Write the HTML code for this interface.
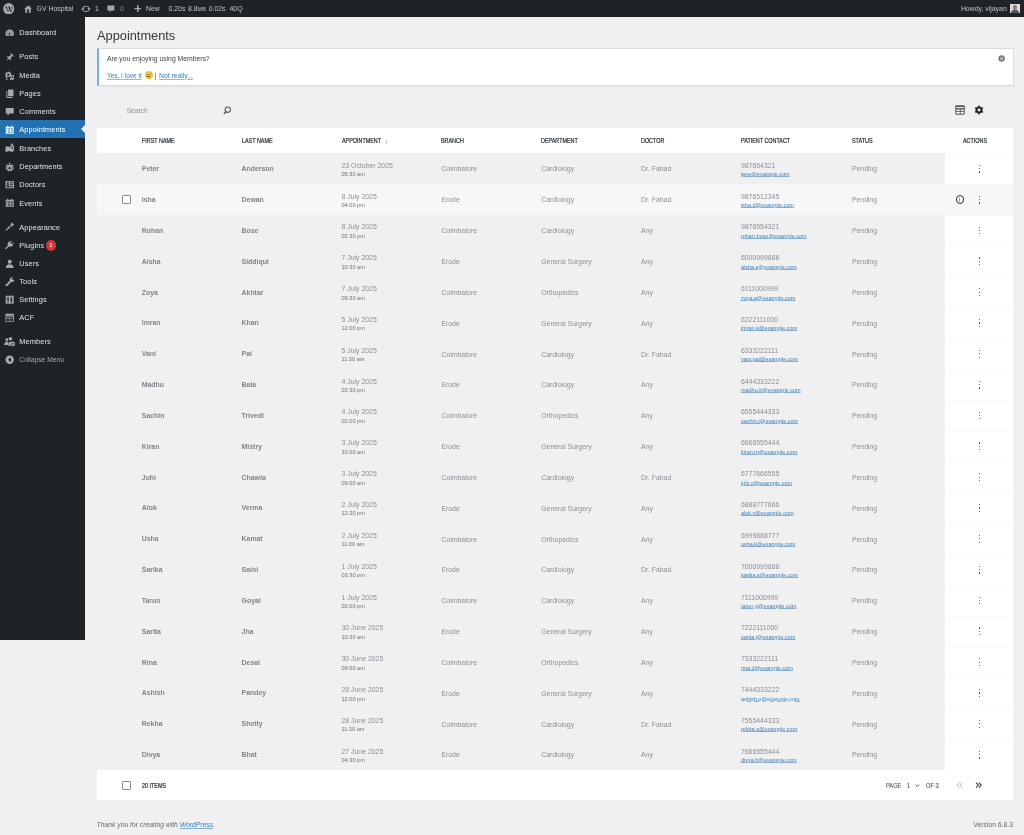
<!DOCTYPE html>
<html><head><meta charset="utf-8"><title>Appointments</title><style>
html,body{margin:0;padding:0}
body{width:1024px;height:835px;overflow:hidden;will-change:transform;background:#f0f0f1;position:relative;font-family:"Liberation Sans",sans-serif;color:#3c434a}
#ab{position:absolute;left:0;top:0;width:1024px;height:17px;background:#1d2327;color:#c3c4c7;font-size:6.9px}
#ab .t{position:absolute;top:0.4px;line-height:17px;white-space:nowrap}
#ab svg{position:absolute}
#sb{position:absolute;left:0;top:17px;width:85px;height:623px;background:#1d2327}
.mi{position:absolute;left:0;width:85px;height:18.4px;color:#e2e3e5;font-size:7.35px;line-height:18.4px}
.mi span{position:absolute;left:19.3px;top:0.8px;white-space:nowrap;letter-spacing:0.12px}
.mi svg{position:absolute;left:4.8px;top:4.6px;width:9.4px;height:9.4px}
.mi.cur{background:#2271b1;color:#fff;height:18px}
.mi.cur:after{content:"";position:absolute;right:0;top:4.95px;border:4.2px solid transparent;border-right-color:#f0f0f1;border-left:0}
.mi .badge{position:absolute;top:4.5px;width:10.2px;height:10.2px;border-radius:50%;background:#d63638;color:#fff;font-size:6px;line-height:10.2px;text-align:center}
h1{position:absolute;left:97px;top:26.8px;margin:0;font-weight:normal;font-size:12.8px;line-height:18px;color:#32373c}
#notice{position:absolute;left:97px;top:48.2px;width:916.6px;height:37.6px;box-sizing:border-box;background:#fff;border:0.6px solid #dcdcde;border-left:2.3px solid #72aee6;box-shadow:0 0.5px 0.5px rgba(0,0,0,.04);font-size:6.8px;color:#3c434a}
#notice .q{position:absolute;left:7.9px;top:5px;line-height:9px;white-space:nowrap}
#notice .l{position:absolute;left:7.9px;top:21.4px;font-size:6.5px;line-height:9px;white-space:nowrap}
#notice a{color:#3582c4;text-decoration:underline;text-decoration-color:#8fb8dc}
.emo{display:inline-block;position:relative;width:8px;height:8px;border-radius:50%;background:#f0c33c;vertical-align:-1.5px;margin:0 2.2px 0 2.8px}.emo:before{content:"";position:absolute;left:2.2px;top:2.8px;width:0.9px;height:0.9px;background:#6b5a1e;box-shadow:2.7px 0 0 #6b5a1e}.emo:after{content:"";position:absolute;left:2.4px;top:5.2px;width:3.2px;height:0.6px;background:#6b5a1e}
#srch{position:absolute;left:126.7px;top:105.2px;font-size:6.6px;color:#8c8f94;line-height:11px}
#tbl{position:absolute;left:97px;top:128.4px;width:916px;height:672px}
#thead{position:absolute;left:0;top:0;width:916px;height:24.8px;background:#fff}
.th{position:absolute;top:0.6px;line-height:24.8px;font-size:6.6px;font-weight:normal;-webkit-text-stroke:0.2px #1d2327;color:#1d2327;white-space:nowrap;transform:scaleX(.82);transform-origin:0 50%}
.row{position:absolute;left:97px;width:916px;height:30.84px;background:#f0f0f1}
.row.hover{background:#f7f7f7}
.row span{position:absolute;white-space:nowrap}
.nm{top:1px;line-height:30.84px;font-size:6.9px;font-weight:bold;color:#808387}
.tx{top:1.3px;line-height:30.84px;font-size:6.9px;color:#8c8f94}
.dt{top:8.56px;font-size:6.9px;color:#8c8f94}
.dt b{display:block;font-weight:normal;line-height:7.5px}
.dt i{display:block;font-style:normal;font-size:5.6px;line-height:11px;color:#6c7075}
.ct{top:8.56px;font-size:6.9px;color:#8c8f94}
.ct b{display:block;font-weight:normal;line-height:7.5px}
.ct a{display:block;font-size:5.5px;line-height:10.8px;color:#3a80ba;text-decoration:underline;text-decoration-color:#86aed0;text-underline-offset:0.1px;text-decoration-thickness:0.5px}
.act{left:848px;top:0;width:68px;height:30.84px;background:#fff;box-shadow:inset 0 0.6px 0 #f2f2f2}
.row.hover .act{background:#f7f7f7}
.dots{left:33.6px;top:11.65px;width:2px;height:10px}
.dots i{display:block;width:1.2px;height:1.2px;border-radius:50%;background:#2c3338;margin:0 0 2.15px 0}
.info{left:10.6px;top:10.9px;width:8.8px;height:8.8px;box-sizing:border-box;border:1.3px solid #2c3338;border-radius:50%}.info i{position:absolute;left:2.4px;top:1.4px;width:1.5px;height:4.4px;background:#a0a3a8;border-radius:0.5px}
.cb{top:11px;width:9.2px;height:9px;box-sizing:border-box;border:0.9px solid #82868b;border-radius:1.2px;background:#fff}
#tfoot{position:absolute;left:97px;top:770px;width:916px;height:30px;background:#fff}
#tfoot span{position:absolute;white-space:nowrap}
#foot1{position:absolute;left:96.6px;top:819px;font-size:6.78px;font-style:italic;color:#646970;line-height:11px}
#foot1 a{color:#3a80ba;text-decoration:underline;text-decoration-color:#86aed0;text-decoration-thickness:0.6px}
#foot2{position:absolute;right:11px;top:819px;font-size:6.8px;color:#646970;line-height:11px}

.pg{top:0.5px;line-height:30px;font-size:6.3px;color:#50575e;-webkit-text-stroke:0.1px #50575e;transform:scaleX(.9);transform-origin:0 50%}

</style></head><body>
<div id="ab">
  <svg style="left:3.4px;top:2.8px" width="11.4" height="11.4" viewBox="0 0 20 20"><circle cx="10" cy="10" r="9.8" fill="#a7aaad"/><path d="M3.3 6.4h4.3v.9H6.7l2.3 7 1.5-4.4-.9-2.6h-.8v-.9h4.1v.9h-.9l2.3 7 1-3.3c.5-1.6.3-2.4-.2-3.2-.3-.5-.5-1 .1-1.3h1.6l-.3 3.5-1.9 5.8h-.9L11 10.9l-1.5 4.5h-.9L4.9 7.3h-1.6z" fill="#1d2327"/></svg>
  <svg style="left:23.8px;top:4.5px" width="8" height="8.2" viewBox="0 0 20 20"><path d="M10 1L0.5 9.6h2.6V19h13.8V9.6h2.6L16 6.4V2h-2.6v2.1z" fill="#a7aaad"/><circle cx="10" cy="13" r="2.4" fill="#1d2327"/><rect x="7.6" y="13" width="4.8" height="6" fill="#1d2327"/></svg>
  <span class="t" style="left:36.6px">GV Hospital</span>
  <svg style="left:80.6px;top:4.6px" width="10" height="7.8" viewBox="0 0 20 16"><path d="M10 1.5c3.4 0 6.3 2.2 7.3 5.3H20l-3.5 4-3.5-4h2.2A5.2 5.2 0 0 0 5.2 6.8l-2.6 0C3.7 3.7 6.6 1.5 10 1.5z M10 14.5c-3.4 0-6.3-2.2-7.3-5.3H0l3.5-4 3.5 4H4.8a5.2 5.2 0 0 0 10 0h2.6c-1.1 3.1-4 5.3-7.4 5.3z" fill="#a7aaad"/></svg>
  <span class="t" style="left:94.9px">1</span>
  <svg style="left:107.4px;top:5.1px" width="7.8" height="7.8" viewBox="0 0 20 20"><path d="M1 1h18v13h-8l-4 5v-5H1z" fill="#a7aaad"/></svg>
  <span class="t" style="left:120.3px;color:#8c8f94">0</span>
  <svg style="left:133.9px;top:5.1px" width="7.6" height="7.2" viewBox="0 0 20 20"><path d="M8 0.5h4v7.5h7.5v4H12v7.5H8V12H0.5V8H8z" fill="#a7aaad"/></svg>
  <span class="t" style="left:146px">New</span>
  <span class="t" style="left:168.5px">0.20s</span>
  <span class="t" style="left:188px">8.8<span style="font-size:5.5px">MB</span></span>
  <span class="t" style="left:208.7px">0.02s</span>
  <span class="t" style="left:229.5px">40Q</span>
  <span class="t" style="left:960.9px">Howdy, vijayan</span>
  <div style="position:absolute;left:1009.9px;top:3.9px;width:9.8px;height:9.6px;background:#dcdadb;overflow:hidden"><div style="position:absolute;left:3px;top:1.2px;width:3.8px;height:4.6px;border-radius:45%;background:#8e7b7b"></div><div style="position:absolute;left:0.8px;top:6px;width:8.2px;height:4px;border-radius:3px 3px 0 0;background:#50545e"></div></div>
</div>
<div id="sb">
<div class="mi" style="top:6.45px"><svg viewBox="0 0 20 20"><path d="M10 3.2C4.9 3.2 1 7.2 1 12.2c0 1.6.4 3 1.1 4.3h15.8c.7-1.3 1.1-2.7 1.1-4.3 0-5-3.9-9-9-9z" fill="#a7aaad"/><path d="M12.8 5.6l-2.2 6.2a1.8 1.8 0 1 1-1.6-.5z" fill="#1d2327"/><circle cx="4.6" cy="12" r="1" fill="#1d2327"/><circle cx="15.4" cy="12" r="1" fill="#1d2327"/><circle cx="6.3" cy="7.8" r="1" fill="#1d2327"/></svg><span>Dashboard</span></div>
<div class="mi" style="top:30.50px"><svg viewBox="0 0 20 20"><path d="M11.5 1l7.5 7.5-1.8 1.1-1.8-.5-3.3 3.3.6 3.6-1.7 1.7-3.2-3.2-5.6 5.6H1.5v-.7l5.6-5.6-3.2-3.2 1.7-1.7 3.6.6 3.3-3.3-.5-1.8z" fill="#a7aaad"/></svg><span>Posts</span></div>
<div class="mi" style="top:49.10px"><svg viewBox="0 0 20 20"><path d="M1 3.5h3l1.2-2h4.6l1.2 2h2v8.5H1z" fill="#a7aaad"/><circle cx="7" cy="7.6" r="2.4" fill="#1d2327"/><path d="M13 9.5l6-1.5v8.8a2.2 2.2 0 1 1-1.8-2.2v-4l-2.4.6v5.6a2.2 2.2 0 1 1-1.8-2.2z M2 13h3v1.8H3.8V18H7v1.5H3a1 1 0 0 1-1-1z" fill="#a7aaad"/></svg><span>Media</span></div>
<div class="mi" style="top:67.40px"><svg viewBox="0 0 20 20"><path d="M6.5 1H18v14.5H6.5z M3 4.5h2v12.5h11V19H3z" fill="#a7aaad"/></svg><span>Pages</span></div>
<div class="mi" style="top:85.10px"><svg viewBox="0 0 20 20"><path d="M1.5 2h17v12h-8.5l-4.5 4.8V14H1.5z" fill="#a7aaad"/></svg><span>Comments</span></div>
<div class="mi cur" style="top:103.40px"><svg viewBox="0 0 20 20"><path d="M1.5 3.5h3V1.5h2.2v2h6.6v-2h2.2v2h3v15.5h-17z" fill="#fff"/><path d="M3.5 7.5h13v10h-13z" fill="#2271b1"/><path d="M4.3 8.3h2.2v8.4H4.3zm3.2 0h2.2v8.4H7.5zm3.2 0h2.2v8.4h-2.2zm3.2 0h2v8.4h-2z" fill="#fff"/></svg><span>Appointments</span></div>
<div class="mi" style="top:121.80px"><svg viewBox="0 0 20 20"><path d="M1 8.5l4.5-1.8 4.5 1.8 4-1.6V12a1 1 0 0 0 2 0V6.1l3-1.1V17l-5 2-4.5-1.8L1 19z" fill="#a7aaad"/><path d="M14.5 1a2.8 2.8 0 0 1 2.8 2.8c0 2.2-2.8 5.2-2.8 5.2s-2.8-3-2.8-5.2A2.8 2.8 0 0 1 14.5 1z" fill="#a7aaad"/><circle cx="14.5" cy="3.8" r="1" fill="#1d2327"/></svg><span>Branches</span></div>
<div class="mi" style="top:140.30px"><svg viewBox="0 0 20 20"><path d="M10 1.5a2 2 0 1 1 0 4 2 2 0 0 1 0-4z M4 5.5a1.8 1.8 0 1 1 0 3.6A1.8 1.8 0 0 1 4 5.5z M16 5.5a1.8 1.8 0 1 1 0 3.6 1.8 1.8 0 0 1 0-3.6z M6.5 6.5h7l2 3v7.5l-2 2h-7l-2-2V9.5z M1.5 10h2v6h-2z M16.5 10h2v6h-2z" fill="#a7aaad"/><path d="M9 9.5h2v2.5h2.5v2H11v2.5H9V14H6.5v-2H9z" fill="#1d2327"/></svg><span>Departments</span></div>
<div class="mi" style="top:158.50px"><svg viewBox="0 0 20 20"><path d="M1 2.5h18v15H1z" fill="#a7aaad"/><path d="M10.5 5h6.5v1.8h-6.5zm0 3.5h6.5v1.8h-6.5z M3 13.5h14V15.5H3z" fill="#1d2327"/><circle cx="6" cy="6.8" r="2" fill="#1d2327"/><path d="M2.8 12.5c0-2.2 1.4-3.5 3.2-3.5s3.2 1.3 3.2 3.5z" fill="#1d2327"/></svg><span>Doctors</span></div>
<div class="mi" style="top:176.80px"><svg viewBox="0 0 20 20"><path d="M1.5 3.5h3V1.5h2.2v2h6.6v-2h2.2v2h3v15.5h-17z" fill="#a7aaad"/><path d="M3.5 7.5h13v10h-13z" fill="#1d2327"/><path d="M4.3 8.3h2.2v8.4H4.3zm3.2 0h2.2v8.4H7.5zm3.2 0h2.2v8.4h-2.2zm3.2 0h2v8.4h-2z" fill="#a7aaad"/></svg><span>Events</span></div>
<div class="mi" style="top:200.80px"><svg viewBox="0 0 20 20"><path d="M14 1l5 5-3.5 3.5-1.3-1.3-4.4 4.4-1.5-1.5 4.4-4.4L11.4 5.4z M8.6 10.2l1.2 1.2c.5.5.5 1.3 0 1.8l-.8.8c-.5.5-1.2.6-1.8.3L2.5 19 1 17.5l4.7-4.7c-.3-.6-.2-1.3.3-1.8l.8-.8c.5-.5 1.3-.5 1.8 0z" fill="#a7aaad"/></svg><span>Appearance</span></div>
<div class="mi" style="top:218.90px"><svg viewBox="0 0 20 20"><path d="M13.2 1l1.4 1.4-3 3 3 3 3-3L19 6.8l-3 3 1.2 1.2-1.8 1.8c-2 2-5 2.2-7.2.8L4 17.8V19H1v-3h1.2l4.2-4.2c-1.4-2.2-1.2-5.2.8-7.2L9 2.8l1.2 1.2z" fill="#a7aaad"/></svg><span>Plugins</span><span class="badge" style="left:45.9px">1</span></div>
<div class="mi" style="top:237.30px"><svg viewBox="0 0 20 20"><circle cx="10" cy="6" r="4.3" fill="#a7aaad"/><path d="M2 19c0-4.5 2.5-7.6 8-7.6s8 3.1 8 7.6z" fill="#a7aaad"/></svg><span>Users</span></div>
<div class="mi" style="top:255.40px"><svg viewBox="0 0 20 20"><path d="M17.3 1.2l-3 3 .5 1.9 1.9.5 3-3c.9 2.3.2 4.9-1.8 6.4-1.4 1-3.2 1.3-4.9.8L4.4 19.4a2.1 2.1 0 0 1-3-3l8.6-8.6c-.5-1.7-.2-3.5.8-4.9 1.5-2 4.2-2.7 6.5-1.7z" fill="#a7aaad"/></svg><span>Tools</span></div>
<div class="mi" style="top:273.60px"><svg viewBox="0 0 20 20"><path d="M1.5 1.5h17v17h-17z" fill="#a7aaad"/><path d="M5.5 3.5h2v4h1.5v2.2H7.5v6.8h-2V9.7H4V7.5h1.5z M12.5 3.5h2v6h1.5v2.2h-1.5v4.8h-2v-4.8H11V9.5h1.5z" fill="#1d2327"/></svg><span>Settings</span></div>
<div class="mi" style="top:291.70px"><svg viewBox="0 0 20 20"><path d="M1 1.5h18v17H1z" fill="#a7aaad"/><path d="M2.8 6h14.4v4H2.8z M2.8 11.6h6.4v5.2H2.8z M10.8 11.6h6.4v5.2h-6.4z" fill="#1d2327"/><path d="M4 7.2h12v1.6H4z" fill="#a7aaad"/></svg><span>ACF</span></div>
<div class="mi" style="top:315.50px"><svg viewBox="0 0 20 20" style="left:3.6px;top:3.7px;width:11.2px;height:11.2px"><circle cx="5" cy="6.5" r="2.6" fill="#a7aaad"/><path d="M0.5 16c0-3.6 1.8-6 4.5-6 1.4 0 2.5.6 3.3 1.6C7.4 13 7 14.5 7 16z" fill="#a7aaad"/><circle cx="11.5" cy="4.8" r="3.2" fill="#a7aaad"/><path d="M7.5 17.5c0-4.4 1.6-7.4 4-7.4 1 0 1.8.4 2.5 1.1-1.5 1.2-2.5 3.5-2.5 6.3z" fill="#a7aaad"/><circle cx="15.5" cy="14" r="4.2" fill="#a7aaad"/><circle cx="15.5" cy="14" r="1.6" fill="#1d2327"/></svg><span>Members</span></div>
<div class="mi" style="top:333.60px"><svg viewBox="0 0 20 20"><circle cx="10" cy="10" r="9" fill="#a7aaad"/><path d="M12.8 5.2v9.6L6 10z" fill="#1d2327"/></svg><span style="color:#a7aaad;font-size:6.7px;letter-spacing:0">Collapse Menu</span></div>

</div>
<h1>Appointments</h1>
<div id="notice">
  <div class="q">Are you enjoying using Members?</div>
  <div class="l"><a>Yes, I love it</a><span class="emo"></span>|<a style="margin-left:2.6px;font-size:6.8px">Not really...</a></div>
  <svg style="position:absolute;right:7.7px;top:6.2px" width="7.2" height="7.2" viewBox="0 0 20 20"><circle cx="10" cy="10" r="9" fill="#787c82"/><path d="M6.5 6.5l7 7M13.5 6.5l-7 7" stroke="#fff" stroke-width="2.4"/></svg>
</div>
<div id="srch">Search</div>
<svg style="position:absolute;left:222px;top:105px" width="10" height="10" viewBox="0 0 10 10"><circle cx="5.8" cy="4.7" r="2.65" fill="none" stroke="#50575e" stroke-width="1.1"/><path d="M3.9 6.7L2.2 8.5" stroke="#50575e" stroke-width="1.3" stroke-linecap="round"/></svg>
<svg style="position:absolute;left:955px;top:105px" width="10" height="10" viewBox="0 0 20 20"><rect x="0.5" y="0.5" width="19" height="19" rx="2.6" fill="#50575e"/><rect x="2.4" y="4" width="15.2" height="2.2" fill="#f0f0f1"/><rect x="2.4" y="9" width="7.4" height="2.8" fill="#f0f0f1"/><rect x="11.2" y="9" width="6.4" height="2.8" fill="#f0f0f1"/><rect x="2.4" y="13.6" width="7.4" height="3.8" fill="#f0f0f1"/><rect x="11.2" y="13.6" width="6.4" height="3.8" fill="#f0f0f1"/></svg>
<svg style="position:absolute;left:974.2px;top:105.1px" width="10" height="10" viewBox="0 0 10 10"><path d="M5.00 0.45 L6.52 2.36 L8.94 2.73 L8.05 5.00 L8.94 7.27 L6.52 7.64 L5.00 9.55 L3.48 7.64 L1.06 7.28 L1.95 5.00 L1.06 2.72 L3.47 2.36Z" fill="#1d2327" stroke="#1d2327" stroke-width="0.45" stroke-linejoin="round"/><circle cx="5" cy="5" r="1.45" fill="#f0f0f1"/></svg>
<div id="thead" style="position:absolute;left:97px;top:128.4px">
  <span class="th" style="left:44.8px">FIRST NAME</span>
  <span class="th" style="left:144.6px">LAST NAME</span>
  <span class="th" style="left:244.5px">APPOINTMENT <span style="font-size:6px;margin-left:3px;-webkit-text-stroke:0">&#8595;</span></span>
  <span class="th" style="left:344.4px">BRANCH</span>
  <span class="th" style="left:444.2px">DEPARTMENT</span>
  <span class="th" style="left:544px">DOCTOR</span>
  <span class="th" style="left:643.9px">PATIENT CONTACT</span>
  <span class="th" style="left:754.9px">STATUS</span>
  <span class="th" style="left:866.2px">ACTIONS</span>
</div>
<div class="row" style="top:153.20px"><span class="nm" style="left:44.8px">Peter</span><span class="nm" style="left:144.6px">Anderson</span><span class="dt" style="left:244.5px"><b>23 October 2025</b><i>05:30 am</i></span><span class="tx" style="left:344.4px">Coimbatore</span><span class="tx" style="left:444.2px">Cardiology</span><span class="tx" style="left:544.0px">Dr. Fahad</span><span class="ct" style="left:643.9px"><b>987654321</b><a>jane@example.com</a></span><span class="tx" style="left:754.9px">Pending</span><span class="act"><span class="dots"><i></i><i></i><i></i></span></span></div>
<div class="row hover" style="top:184.04px"><span class="cb" style="left:25px"></span><span class="nm" style="left:44.8px">Isha</span><span class="nm" style="left:144.6px">Dewan</span><span class="dt" style="left:244.5px"><b>8 July 2025</b><i>04:00 pm</i></span><span class="tx" style="left:344.4px">Erode</span><span class="tx" style="left:444.2px">Cardiology</span><span class="tx" style="left:544.0px">Dr. Fahad</span><span class="ct" style="left:643.9px"><b>9876512345</b><a>isha.d@example.com</a></span><span class="tx" style="left:754.9px">Pending</span><span class="act"><span class="info"><i></i></span><span class="dots"><i></i><i></i><i></i></span></span></div>
<div class="row" style="top:214.88px"><span class="nm" style="left:44.8px">Rohan</span><span class="nm" style="left:144.6px">Bose</span><span class="dt" style="left:244.5px"><b>8 July 2025</b><i>02:30 pm</i></span><span class="tx" style="left:344.4px">Coimbatore</span><span class="tx" style="left:444.2px">Cardiology</span><span class="tx" style="left:544.0px">Any</span><span class="ct" style="left:643.9px"><b>9876554321</b><a>rohan.bose@example.com</a></span><span class="tx" style="left:754.9px">Pending</span><span class="act"><span class="dots"><i></i><i></i><i></i></span></span></div>
<div class="row" style="top:245.72px"><span class="nm" style="left:44.8px">Aisha</span><span class="nm" style="left:144.6px">Siddiqui</span><span class="dt" style="left:244.5px"><b>7 July 2025</b><i>10:30 am</i></span><span class="tx" style="left:344.4px">Erode</span><span class="tx" style="left:444.2px">General Surgery</span><span class="tx" style="left:544.0px">Any</span><span class="ct" style="left:643.9px"><b>6000999888</b><a>aisha.s@example.com</a></span><span class="tx" style="left:754.9px">Pending</span><span class="act"><span class="dots"><i></i><i></i><i></i></span></span></div>
<div class="row" style="top:276.56px"><span class="nm" style="left:44.8px">Zoya</span><span class="nm" style="left:144.6px">Akhtar</span><span class="dt" style="left:244.5px"><b>7 July 2025</b><i>09:30 am</i></span><span class="tx" style="left:344.4px">Coimbatore</span><span class="tx" style="left:444.2px">Orthopedics</span><span class="tx" style="left:544.0px">Any</span><span class="ct" style="left:643.9px"><b>6111000999</b><a>zoya.a@example.com</a></span><span class="tx" style="left:754.9px">Pending</span><span class="act"><span class="dots"><i></i><i></i><i></i></span></span></div>
<div class="row" style="top:307.40px"><span class="nm" style="left:44.8px">Imran</span><span class="nm" style="left:144.6px">Khan</span><span class="dt" style="left:244.5px"><b>5 July 2025</b><i>12:00 pm</i></span><span class="tx" style="left:344.4px">Erode</span><span class="tx" style="left:444.2px">General Surgery</span><span class="tx" style="left:544.0px">Any</span><span class="ct" style="left:643.9px"><b>6222111000</b><a>imran.k@example.com</a></span><span class="tx" style="left:754.9px">Pending</span><span class="act"><span class="dots"><i></i><i></i><i></i></span></span></div>
<div class="row" style="top:338.24px"><span class="nm" style="left:44.8px">Vani</span><span class="nm" style="left:144.6px">Pai</span><span class="dt" style="left:244.5px"><b>5 July 2025</b><i>11:30 am</i></span><span class="tx" style="left:344.4px">Coimbatore</span><span class="tx" style="left:444.2px">Cardiology</span><span class="tx" style="left:544.0px">Dr. Fahad</span><span class="ct" style="left:643.9px"><b>6333222111</b><a>vani.pai@example.com</a></span><span class="tx" style="left:754.9px">Pending</span><span class="act"><span class="dots"><i></i><i></i><i></i></span></span></div>
<div class="row" style="top:369.08px"><span class="nm" style="left:44.8px">Madhu</span><span class="nm" style="left:144.6px">Bala</span><span class="dt" style="left:244.5px"><b>4 July 2025</b><i>03:30 pm</i></span><span class="tx" style="left:344.4px">Erode</span><span class="tx" style="left:444.2px">Cardiology</span><span class="tx" style="left:544.0px">Any</span><span class="ct" style="left:643.9px"><b>6444333222</b><a>madhu.b@example.com</a></span><span class="tx" style="left:754.9px">Pending</span><span class="act"><span class="dots"><i></i><i></i><i></i></span></span></div>
<div class="row" style="top:399.92px"><span class="nm" style="left:44.8px">Sachin</span><span class="nm" style="left:144.6px">Trivedi</span><span class="dt" style="left:244.5px"><b>4 July 2025</b><i>02:00 pm</i></span><span class="tx" style="left:344.4px">Coimbatore</span><span class="tx" style="left:444.2px">Orthopedics</span><span class="tx" style="left:544.0px">Any</span><span class="ct" style="left:643.9px"><b>6555444333</b><a>sachin.t@example.com</a></span><span class="tx" style="left:754.9px">Pending</span><span class="act"><span class="dots"><i></i><i></i><i></i></span></span></div>
<div class="row" style="top:430.76px"><span class="nm" style="left:44.8px">Kiran</span><span class="nm" style="left:144.6px">Mistry</span><span class="dt" style="left:244.5px"><b>3 July 2025</b><i>10:00 am</i></span><span class="tx" style="left:344.4px">Erode</span><span class="tx" style="left:444.2px">General Surgery</span><span class="tx" style="left:544.0px">Any</span><span class="ct" style="left:643.9px"><b>6666555444</b><a>kiran.m@example.com</a></span><span class="tx" style="left:754.9px">Pending</span><span class="act"><span class="dots"><i></i><i></i><i></i></span></span></div>
<div class="row" style="top:461.60px"><span class="nm" style="left:44.8px">Juhi</span><span class="nm" style="left:144.6px">Chawla</span><span class="dt" style="left:244.5px"><b>3 July 2025</b><i>09:00 am</i></span><span class="tx" style="left:344.4px">Coimbatore</span><span class="tx" style="left:444.2px">Cardiology</span><span class="tx" style="left:544.0px">Dr. Fahad</span><span class="ct" style="left:643.9px"><b>6777666555</b><a>juhi.c@example.com</a></span><span class="tx" style="left:754.9px">Pending</span><span class="act"><span class="dots"><i></i><i></i><i></i></span></span></div>
<div class="row" style="top:492.44px"><span class="nm" style="left:44.8px">Alok</span><span class="nm" style="left:144.6px">Verma</span><span class="dt" style="left:244.5px"><b>2 July 2025</b><i>12:30 pm</i></span><span class="tx" style="left:344.4px">Erode</span><span class="tx" style="left:444.2px">General Surgery</span><span class="tx" style="left:544.0px">Any</span><span class="ct" style="left:643.9px"><b>6888777666</b><a>alok.v@example.com</a></span><span class="tx" style="left:754.9px">Pending</span><span class="act"><span class="dots"><i></i><i></i><i></i></span></span></div>
<div class="row" style="top:523.28px"><span class="nm" style="left:44.8px">Usha</span><span class="nm" style="left:144.6px">Kamat</span><span class="dt" style="left:244.5px"><b>2 July 2025</b><i>11:00 am</i></span><span class="tx" style="left:344.4px">Coimbatore</span><span class="tx" style="left:444.2px">Orthopedics</span><span class="tx" style="left:544.0px">Any</span><span class="ct" style="left:643.9px"><b>6999888777</b><a>usha.k@example.com</a></span><span class="tx" style="left:754.9px">Pending</span><span class="act"><span class="dots"><i></i><i></i><i></i></span></span></div>
<div class="row" style="top:554.12px"><span class="nm" style="left:44.8px">Sarika</span><span class="nm" style="left:144.6px">Saini</span><span class="dt" style="left:244.5px"><b>1 July 2025</b><i>03:30 pm</i></span><span class="tx" style="left:344.4px">Erode</span><span class="tx" style="left:444.2px">Cardiology</span><span class="tx" style="left:544.0px">Dr. Fahad</span><span class="ct" style="left:643.9px"><b>7000999888</b><a>sarika.s@example.com</a></span><span class="tx" style="left:754.9px">Pending</span><span class="act"><span class="dots"><i></i><i></i><i></i></span></span></div>
<div class="row" style="top:584.96px"><span class="nm" style="left:44.8px">Tarun</span><span class="nm" style="left:144.6px">Goyal</span><span class="dt" style="left:244.5px"><b>1 July 2025</b><i>02:00 pm</i></span><span class="tx" style="left:344.4px">Coimbatore</span><span class="tx" style="left:444.2px">Cardiology</span><span class="tx" style="left:544.0px">Any</span><span class="ct" style="left:643.9px"><b>7111000999</b><a>tarun.g@example.com</a></span><span class="tx" style="left:754.9px">Pending</span><span class="act"><span class="dots"><i></i><i></i><i></i></span></span></div>
<div class="row" style="top:615.80px"><span class="nm" style="left:44.8px">Sarita</span><span class="nm" style="left:144.6px">Jha</span><span class="dt" style="left:244.5px"><b>30 June 2025</b><i>10:30 am</i></span><span class="tx" style="left:344.4px">Erode</span><span class="tx" style="left:444.2px">General Surgery</span><span class="tx" style="left:544.0px">Any</span><span class="ct" style="left:643.9px"><b>7222111000</b><a>sarita.j@example.com</a></span><span class="tx" style="left:754.9px">Pending</span><span class="act"><span class="dots"><i></i><i></i><i></i></span></span></div>
<div class="row" style="top:646.64px"><span class="nm" style="left:44.8px">Rina</span><span class="nm" style="left:144.6px">Desai</span><span class="dt" style="left:244.5px"><b>30 June 2025</b><i>09:00 am</i></span><span class="tx" style="left:344.4px">Coimbatore</span><span class="tx" style="left:444.2px">Orthopedics</span><span class="tx" style="left:544.0px">Any</span><span class="ct" style="left:643.9px"><b>7333222111</b><a>rina.d@example.com</a></span><span class="tx" style="left:754.9px">Pending</span><span class="act"><span class="dots"><i></i><i></i><i></i></span></span></div>
<div class="row" style="top:677.48px"><span class="nm" style="left:44.8px">Ashish</span><span class="nm" style="left:144.6px">Pandey</span><span class="dt" style="left:244.5px"><b>28 June 2025</b><i>12:00 pm</i></span><span class="tx" style="left:344.4px">Erode</span><span class="tx" style="left:444.2px">General Surgery</span><span class="tx" style="left:544.0px">Any</span><span class="ct" style="left:643.9px"><b>7444333222</b><a>ashish.p@example.com</a></span><span class="tx" style="left:754.9px">Pending</span><span class="act"><span class="dots"><i></i><i></i><i></i></span></span></div>
<div class="row" style="top:708.32px"><span class="nm" style="left:44.8px">Rekha</span><span class="nm" style="left:144.6px">Shetty</span><span class="dt" style="left:244.5px"><b>28 June 2025</b><i>11:30 am</i></span><span class="tx" style="left:344.4px">Coimbatore</span><span class="tx" style="left:444.2px">Cardiology</span><span class="tx" style="left:544.0px">Dr. Fahad</span><span class="ct" style="left:643.9px"><b>7555444333</b><a>rekha.s@example.com</a></span><span class="tx" style="left:754.9px">Pending</span><span class="act"><span class="dots"><i></i><i></i><i></i></span></span></div>
<div class="row" style="top:739.16px"><span class="nm" style="left:44.8px">Divya</span><span class="nm" style="left:144.6px">Bhat</span><span class="dt" style="left:244.5px"><b>27 June 2025</b><i>04:30 pm</i></span><span class="tx" style="left:344.4px">Erode</span><span class="tx" style="left:444.2px">Cardiology</span><span class="tx" style="left:544.0px">Any</span><span class="ct" style="left:643.9px"><b>7666555444</b><a>divya.b@example.com</a></span><span class="tx" style="left:754.9px">Pending</span><span class="act"><span class="dots"><i></i><i></i><i></i></span></span></div>
<div id="tfoot">
  <span class="cb" style="left:25px;top:10.5px"></span>
  <span class="th" style="left:44.8px;top:0.7px;line-height:30px">20 ITEMS</span>
  <span class="pg" style="left:788.8px">PAGE</span>
  <span class="pg" style="left:810.4px">1</span>
  <svg style="position:absolute;left:818px;top:13.8px" width="4.6" height="3" viewBox="0 0 10 6"><path d="M1 1l4 4 4-4" fill="none" stroke="#3c434a" stroke-width="2"/></svg>
  <span class="pg" style="left:829px">OF 3</span>
  <svg style="position:absolute;left:858.9px;top:12.4px" width="7.2" height="6.2" viewBox="0 0 14 12"><path d="M6.5 1L2 6l4.5 5M12 1L7.5 6l4.5 5" fill="none" stroke="#8c8f94" stroke-width="1.2"/></svg>
  <svg style="position:absolute;left:878px;top:12.4px" width="7.2" height="6.2" viewBox="0 0 14 12"><path d="M2 1l4.5 5L2 11M7.5 1L12 6l-4.5 5" fill="none" stroke="#3c434a" stroke-width="2.2"/></svg>
</div>
<div id="foot1">Thank you for creating with <a>WordPress</a>.</div>
<div id="foot2">Version 6.8.3</div>

</body></html>
